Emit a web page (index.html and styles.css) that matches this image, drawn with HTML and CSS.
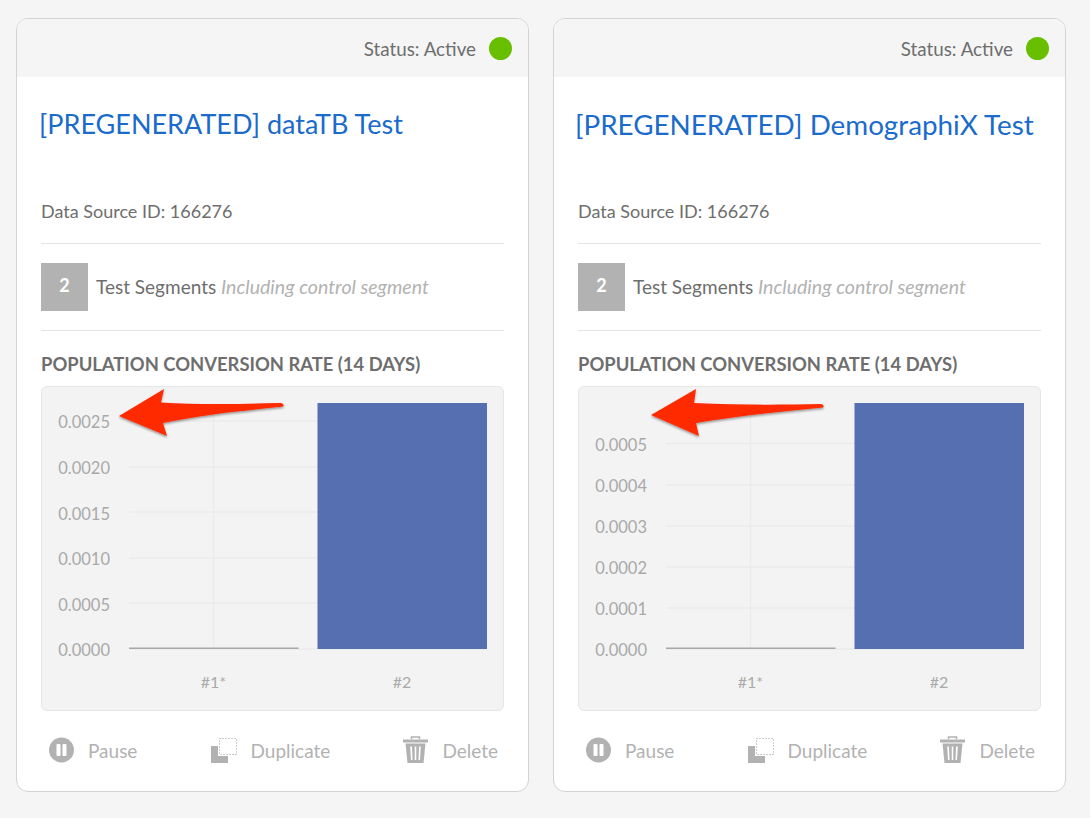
FILE: index.html
```html
<!DOCTYPE html>
<html lang="en">
<head>
  <meta charset="UTF-8">
  <title>Tests</title>
  <link rel="stylesheet" href="styles.css">
</head>
<body>
  <svg class="defs" width="0" height="0">
    <defs>
      <filter id="arrowShadow" x="-10%" y="-20%" width="120%" height="150%">
        <feDropShadow dx="0" dy="1.5" stdDeviation="1" flood-color="#000" flood-opacity="0.4"/>
      </filter>
      <g id="iconPause">
        <circle cx="13.500" cy="13" r="12.500" fill="#b2b2b2"/>
        <rect x="8.500" y="7" width="4" height="12" rx="1" fill="#fff"/>
        <rect x="14.500" y="7" width="4" height="12" rx="1" fill="#fff"/>
      </g>
      <g id="iconDuplicate">
        <path d="M0 9H7V19H17V26H0Z" fill="#b2b2b2"/>
        <rect x="8.500" y="1.500" width="17" height="16" fill="none" stroke="#999" stroke-dasharray="1 2"/>
      </g>
      <g id="iconDelete">
        <path d="M8.500 3V1H16.500V3" fill="none" stroke="#b2b2b2" stroke-width="1.500"/>
        <path d="M0 3.500H25V6.500H0Z" fill="#b2b2b2"/>
        <path d="M2.500 7.500H22.500L20.500 27H4.500ZM7.200 10.500L8 24H9.500L9 10.500ZM11.700 10.500V24H13.300V10.500ZM16 10.500L15.500 24H17L17.800 10.500Z" fill="#b2b2b2" fill-rule="evenodd"/>
      </g>
    </defs>
  </svg>

  <div class="cards">
    <section class="card">
      <header class="card-status">
        <span>Status: Active</span>
        <span class="status-dot"></span>
      </header>
      <div class="card-body">
        <h2 class="card-title">[PREGENERATED] dataTB Test</h2>
        <p class="source-id">Data Source ID: 166276</p>
        <div class="segments">
          <span class="segment-count">2</span>
          <span class="segment-label">Test Segments <em>Including control segment</em></span>
        </div>
        <h3 class="chart-heading">POPULATION CONVERSION RATE (14 DAYS)</h3>
        <div class="chart-box">
          <svg class="chart" width="461" height="323" viewBox="42 387 461 323">
            <g class="grid">
              <line x1="129" x2="487" y1="421" y2="421"/>
              <line x1="129" x2="487" y1="467" y2="467"/>
              <line x1="129" x2="487" y1="512" y2="512"/>
              <line x1="129" x2="487" y1="558" y2="558"/>
              <line x1="129" x2="487" y1="603" y2="603"/>
              <line x1="129" x2="487" y1="649" y2="649"/>
              <line x1="213.500" x2="213.500" y1="403" y2="649"/>
            </g>
            <g class="ticks">
              <text x="110" y="428">0.0025</text>
              <text x="110" y="474">0.0020</text>
              <text x="110" y="520">0.0015</text>
              <text x="110" y="565">0.0010</text>
              <text x="110" y="611">0.0005</text>
              <text x="110" y="656">0.0000</text>
            </g>
            <rect class="bar-low" x="129" y="647.500" width="169.500" height="1.500"/>
            <rect class="bar" x="317.500" y="403" width="169.500" height="246"/>
            <text class="category" x="213.500" y="688">#1*</text>
            <text class="category" x="402" y="688">#2</text>
            <path class="arrow" d="M119 416L164 389L161 402.500C200 405 240 404 281 403Q285 404.500 283 406.500C240 411 200 415 163 423L167 436Z"/>
          </svg>
        </div>
        <div class="actions">
          <span class="action"><svg width="26" height="26"><use href="#iconPause"/></svg>Pause</span>
          <span class="action"><svg width="26" height="26"><use href="#iconDuplicate"/></svg>Duplicate</span>
          <span class="action"><svg width="25" height="28"><use href="#iconDelete"/></svg>Delete</span>
        </div>
      </div>
    </section>

    <section class="card">
      <header class="card-status">
        <span>Status: Active</span>
        <span class="status-dot"></span>
      </header>
      <div class="card-body">
        <h2 class="card-title card-title-long">[PREGENERATED] DemographiX Test</h2>
        <p class="source-id">Data Source ID: 166276</p>
        <div class="segments">
          <span class="segment-count">2</span>
          <span class="segment-label">Test Segments <em>Including control segment</em></span>
        </div>
        <h3 class="chart-heading">POPULATION CONVERSION RATE (14 DAYS)</h3>
        <div class="chart-box">
          <svg class="chart" width="461" height="323" viewBox="579 387 461 323">
            <g class="grid">
              <line x1="666" x2="1024" y1="443.500" y2="443.500"/>
              <line x1="666" x2="1024" y1="485" y2="485"/>
              <line x1="666" x2="1024" y1="526" y2="526"/>
              <line x1="666" x2="1024" y1="567" y2="567"/>
              <line x1="666" x2="1024" y1="608" y2="608"/>
              <line x1="666" x2="1024" y1="649" y2="649"/>
              <line x1="750.500" x2="750.500" y1="403" y2="649"/>
            </g>
            <g class="ticks">
              <text x="647" y="451">0.0005</text>
              <text x="647" y="492">0.0004</text>
              <text x="647" y="533">0.0003</text>
              <text x="647" y="574">0.0002</text>
              <text x="647" y="615">0.0001</text>
              <text x="647" y="656">0.0000</text>
            </g>
            <rect class="bar-low" x="666" y="647.500" width="169.500" height="1.500"/>
            <rect class="bar" x="854.500" y="403" width="169.500" height="246"/>
            <text class="category" x="750.500" y="688">#1*</text>
            <text class="category" x="939" y="688">#2</text>
            <path class="arrow" d="M651 415L696 389L694 403C735 405 780 405 821 404Q825 405.500 823 407.500C780 412 735 416 696 423L699 436Z"/>
          </svg>
        </div>
        <div class="actions">
          <span class="action"><svg width="26" height="26"><use href="#iconPause"/></svg>Pause</span>
          <span class="action"><svg width="26" height="26"><use href="#iconDuplicate"/></svg>Duplicate</span>
          <span class="action"><svg width="25" height="28"><use href="#iconDelete"/></svg>Delete</span>
        </div>
      </div>
    </section>
  </div>
</body>
</html>
```

FILE: styles.css
```css
html, body {
  margin: 0;
  background: #f5f5f5;
}
body {
  font-family: 'Lato', 'Open Sans', sans-serif;
  color: #6e6e6e;
  height: 818px;
  overflow: hidden;
}
.defs {
  position: absolute;
}
.cards {
  display: flex;
  gap: 24px;
  padding: 18px 0 0 16px;
}
.card {
  width: 513px;
  height: 774px;
  box-sizing: border-box;
  background: #fff;
  border: 1px solid #d3d3d3;
  border-radius: 12px;
  overflow: hidden;
}
.card-status {
  height: 58px;
  background: #f5f5f5;
  display: flex;
  align-items: center;
  justify-content: flex-end;
  gap: 13px;
  padding-right: 16px;
  font-size: 18.800px;
}
.status-dot {
  width: 23px;
  height: 23px;
  border-radius: 50%;
  background: #68bf00;
}
.card-body {
  padding: 0 24px;
}
.card-title {
  margin: 0 0 0 -2px;
  height: 94px;
  padding-top: 28px;
  box-sizing: border-box;
  font-size: 27px;
  line-height: 38px;
  font-weight: 400;
  color: #1a6bcc;
  white-space: nowrap;
}
.card-title-long {
  margin-left: -3px;
  padding-top: 29px;
  font-size: 27.800px;
}
.source-id {
  margin: 0;
  height: 72px;
  line-height: 80px;
  font-size: 18px;
  border-bottom: 1px solid #e4e4e4;
}
.segments {
  height: 86px;
  display: flex;
  align-items: center;
  gap: 8px;
  font-size: 19px;
  border-bottom: 1px solid #e4e4e4;
}
.segment-label {
  padding-bottom: 2px;
}
.segments em {
  color: #b2b2b2;
  font-size: 19.500px;
}
.segment-count {
  width: 47px;
  height: 48px;
  background: #b2b2b2;
  color: #fff;
  font-size: 18px;
  font-weight: 700;
  display: flex;
  align-items: center;
  justify-content: center;
  padding-bottom: 4px;
  box-sizing: border-box;
}
.chart-heading {
  margin: 0;
  height: 55px;
  line-height: 66px;
  font-size: 18.400px;
  font-weight: 700;
  white-space: nowrap;
}
.chart-box {
  width: 463px;
  height: 325px;
  box-sizing: border-box;
  background: #f3f3f3;
  border: 1px solid #e6e6e6;
  border-radius: 6px;
}
.chart {
  display: block;
  overflow: visible;
}
.grid line {
  stroke: #ebebeb;
  stroke-width: 1.500;
}
.ticks text {
  font-size: 16.500px;
  fill: #a9a9a9;
  text-anchor: end;
}
.category {
  font-size: 16px;
  fill: #a9a9a9;
  text-anchor: middle;
}
.bar {
  fill: #566fb0;
}
.bar-low {
  fill: #a8a8a8;
}
.arrow {
  fill: #ff2a00;
  filter: url(#arrowShadow);
}
.actions {
  display: flex;
  justify-content: space-between;
  align-items: center;
  height: 78px;
  padding: 0 6px 0 7px;
  font-size: 19px;
  color: #b2b2b2;
}
.action {
  display: flex;
  align-items: center;
  gap: 14px;
}
```
